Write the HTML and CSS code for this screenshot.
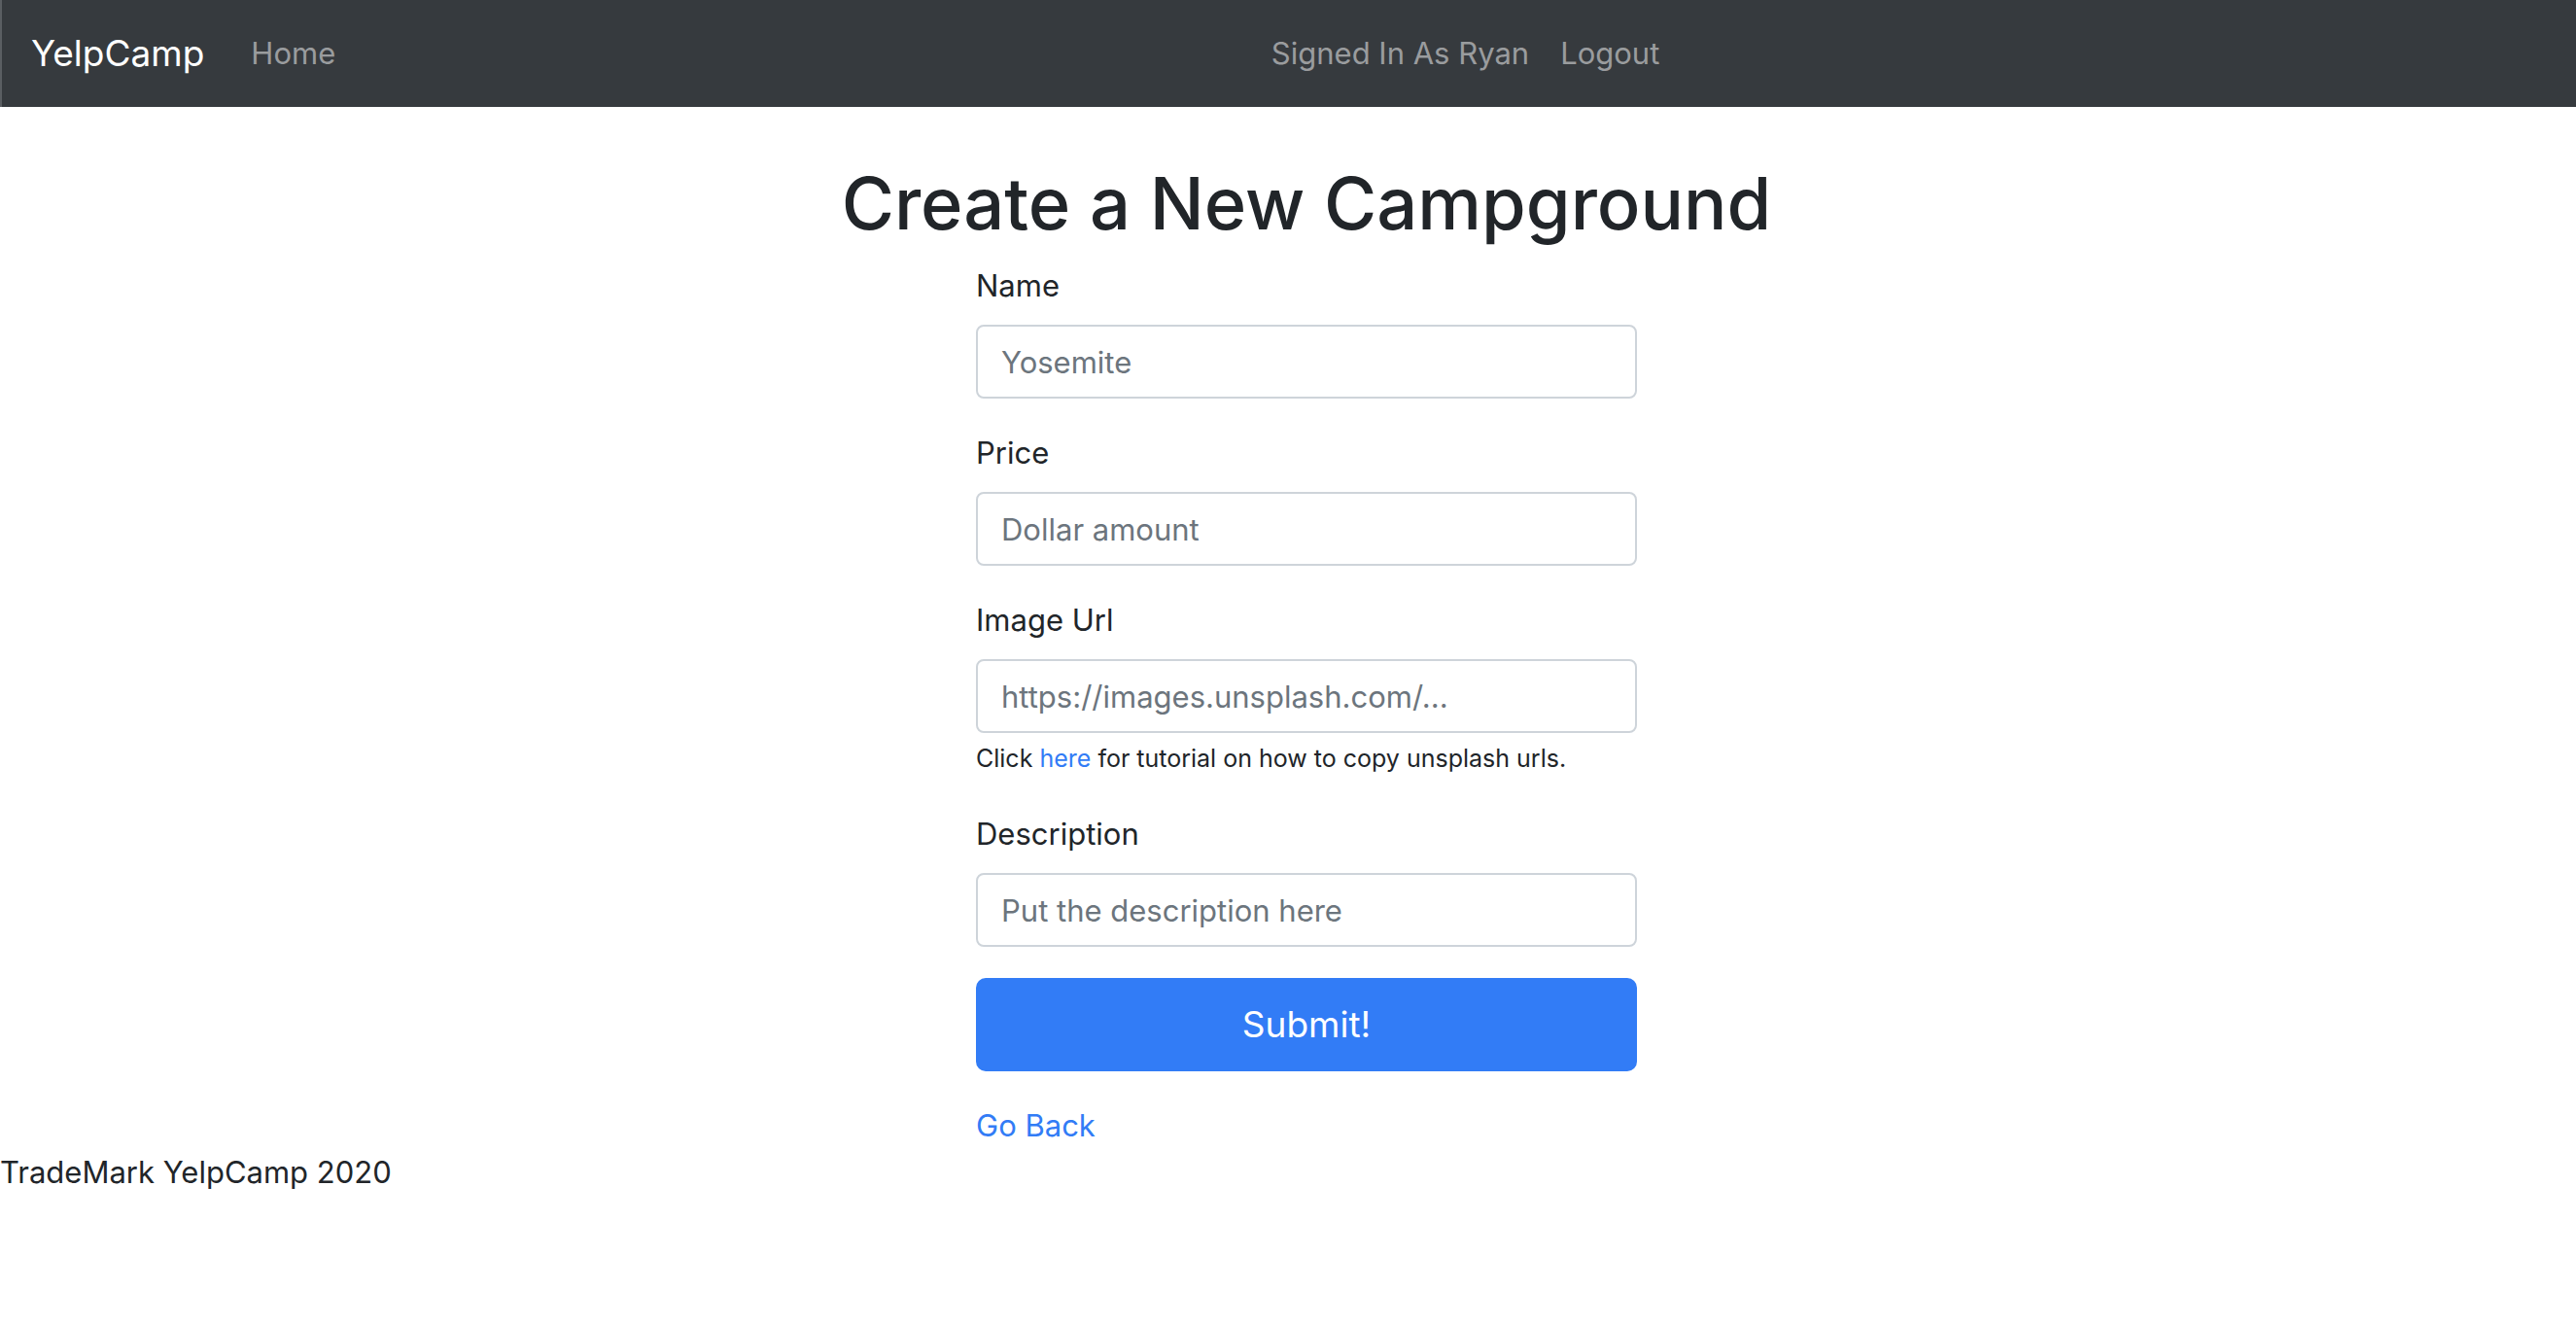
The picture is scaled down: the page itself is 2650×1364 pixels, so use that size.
FILE: index.html
```html
<!DOCTYPE html>
<html lang="en">
<head>
  <meta charset="utf-8">
  <meta name="viewport" content="width=device-width, initial-scale=1">
  <title>YelpCamp</title>
  <link rel="stylesheet" href="styles.css">
</head>
<body>
  <nav class="navbar">
    <a class="navbar-brand" href="#">YelpCamp</a>
    <a class="nav-link" href="#">Home</a>
    <div class="navbar-account">
      <a class="nav-link" href="#">Signed In As Ryan</a>
      <a class="nav-link" href="#">Logout</a>
    </div>
  </nav>

  <main class="container">
    <h1 class="title">Create a New Campground</h1>
    <form class="form">
      <div class="form-group">
        <label for="name">Name</label>
        <input class="form-control" id="name" type="text" placeholder="Yosemite">
      </div>
      <div class="form-group">
        <label for="price">Price</label>
        <input class="form-control" id="price" type="text" placeholder="Dollar amount">
      </div>
      <div class="form-group">
        <label for="image">Image Url</label>
        <input class="form-control" id="image" type="text" placeholder="https://images.unsplash.com/...">
        <small class="form-help">Click <a href="#">here</a> for tutorial on how to copy unsplash urls.</small>
      </div>
      <div class="form-group">
        <label for="description">Description</label>
        <input class="form-control" id="description" type="text" placeholder="Put the description here">
      </div>
      <button class="btn" type="submit">Submit!</button>
      <a class="back" href="#">Go Back</a>
    </form>
  </main>

  <footer>TradeMark YelpCamp 2020</footer>
</body>
</html>
```
FILE: styles.css
```css
* {
  box-sizing: border-box;
}

body {
  margin: 0;
  background: #fff;
  color: #212529;
  font: 400 31px/48px Inter, "Liberation Sans", sans-serif;
}

a {
  color: #327cf6;
  text-decoration: none;
}

.navbar {
  display: flex;
  align-items: center;
  height: 110px;
  padding-left: 30px;
  border-left: 2px solid #5a5e62;
  background: #363a3e;
}

.navbar-brand {
  margin-right: 32px;
  color: #fff;
  font-size: 37px;
}

.nav-link {
  padding: 0 16px;
  color: #9a9c9e;
}

.navbar-account {
  display: flex;
  margin: 0 auto;
  padding-left: 4px;
}

.container {
  display: flex;
  flex-direction: column;
  align-items: center;
  padding: 51px 0 0 38px;
}

.title {
  margin: 0 0 13px;
  font-size: 74px;
  font-weight: 500;
  line-height: 96px;
}

.form {
  display: flex;
  flex-direction: column;
  width: 100%;
  max-width: 680px;
}

.form-group {
  display: flex;
  flex-direction: column;
  margin-bottom: 32px;
}

.form-group label {
  margin-bottom: 16px;
}

.form-control {
  width: 100%;
  height: 76px;
  padding: 0 24px;
  border: 2px solid #ced4da;
  border-radius: 8px;
  background: #fff;
  color: #495057;
  font: inherit;
}

.form-control::placeholder {
  color: #6c757d;
  opacity: 1;
}

.form-help {
  padding-top: 4px;
  font-size: 25px;
  line-height: 44px;
}

.btn {
  height: 96px;
  margin-bottom: 32px;
  border: 0;
  border-radius: 10px;
  background: #327cf6;
  color: #fff;
  font: inherit;
  font-size: 37px;
}

.back {
  align-self: flex-start;
}
```
